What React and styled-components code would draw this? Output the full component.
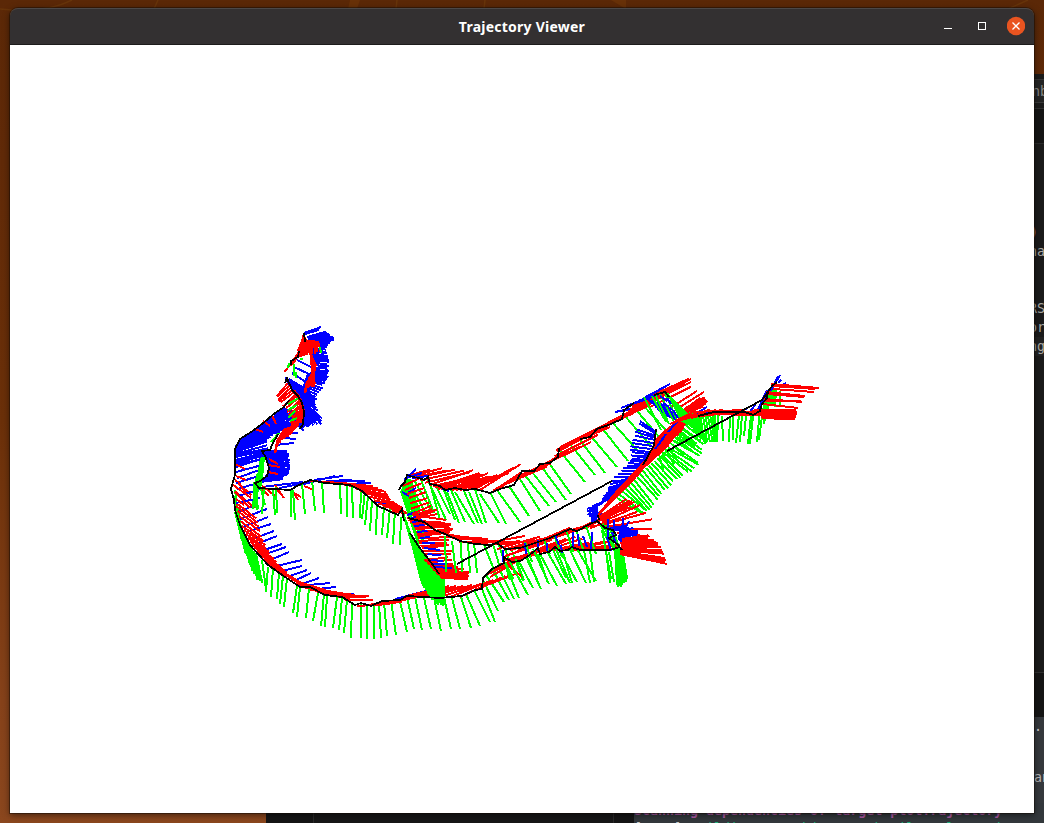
import React from "react";
import styled, { createGlobalStyle } from "styled-components";

const GlobalStyle = createGlobalStyle`
  * { box-sizing: border-box; }
  body { margin: 0; overflow: hidden; }
`;

const Desktop = styled.main`
  position: relative;
  width: 1044px;
  height: 823px;
  overflow: hidden;
  background: linear-gradient(#5b2807 0, #612a08 160px, #6b3009 420px, #86421a 700px, #8b471e 100%);
`;

const Wallpaper = styled.svg`
  display: block;
  width: 1044px;
  height: 823px;
`;

const BackPanel = styled.section`
  position: absolute;
  left: ${(p) => p.$left}px;
  top: ${(p) => p.$top}px;
  width: ${(p) => p.$width}px;
  height: ${(p) => p.$height}px;
  overflow: hidden;
  background: ${(p) => p.$bg};
  font-family: "DejaVu Sans Mono", "Liberation Mono", monospace;
  font-size: 13.3px;
  white-space: pre;
`;

const EditorBand = styled.div`
  height: ${(p) => p.$height}px;
  padding-left: ${(p) => p.$indent || 0}px;
  background: ${(p) => p.$bg || "transparent"};
  border-bottom: ${(p) => (p.$rule ? `1px solid ${p.$rule}` : "none")};
  color: ${(p) => p.$color || "#aaa9a5"};
  line-height: ${(p) => p.$height}px;
`;

const TerminalLine = styled.div`
  height: 18px;
  line-height: 16px;
  color: ${(p) => p.$color};
  font-weight: ${(p) => (p.$bold ? 700 : 400)};
`;

const Green = styled.span`
  color: #1cb47c;
`;

const AppWindow = styled.section`
  position: absolute;
  left: 10px;
  top: 8px;
  width: 1024px;
  height: 805px;
  display: flex;
  flex-direction: column;
  border-radius: 8px 8px 0 0;
  box-shadow: 0 0 0 1px rgba(20, 10, 5, 0.45), 0 2px 7px rgba(0, 0, 0, 0.55);
`;

const TitleBar = styled.header`
  flex: 0 0 37px;
  display: grid;
  grid-template-columns: 1fr auto 1fr;
  align-items: center;
  border-radius: 8px 8px 0 0;
  border-top: 1px solid #4b4849;
  border-bottom: 1px solid #1d1c1c;
  background: #333031;
`;

const Title = styled.h1`
  grid-column: 2;
  margin: 0;
  color: #fff;
  font: 700 14px/20px "Noto Sans", "Open Sans", sans-serif;
  letter-spacing: 0.24px;
`;

const Controls = styled.div`
  justify-self: end;
  display: flex;
  align-items: center;
  gap: 16px;
  padding: 0 9px 2px 0;
`;

const Control = styled.button`
  display: block;
  width: 18px;
  height: 20px;
  padding: 0;
  border: 0;
  background: none;
  svg { display: block; }
`;

const Plot = styled.svg`
  display: block;
  flex: 0 0 768px;
  width: 1024px;
  background: #fff;
`;

const R = "#ff0000";
const G = "#00ff00";
const B = "#0000ff";

// Each strip interpolates between axis segments [x1, y1, x2, y2];
// `steps` is the number of samples drawn between two neighbours.
const strip = (color, steps, keys, jitter = 0) => ({ color, steps, keys, jitter });

const noise = (n) => {
  const v = Math.sin(n * 127.1) * 43758.5453;
  return v - Math.floor(v) - 0.5;
};

const stripPath = ({ keys, steps, jitter }) => {
  const out = [];
  keys.forEach((key, k) => {
    const next = keys[k + 1];
    const count = next ? steps : 1;
    for (let s = 0; s < count; s += 1) {
      const t = s / steps;
      const p = key.map((v, i) => (next ? v + (next[i] - v) * t : v));
      const j = jitter * noise(k * 31 + s + p[0]);
      const q = jitter * noise(k * 17 + s * 3 + p[1]);
      out.push(`M${p[0].toFixed(1)} ${p[1].toFixed(1)}L${(p[2] + j).toFixed(1)} ${(p[3] + q).toFixed(1)}`);
    }
  });
  return out.join("");
};

const strips = [
  // outer loop, left and bottom
  strip(G, 4, [[235,490,238,520],[235,512,245,548],[240,526,253,572],[248,544,258,580],[256,554,262,582]], 3),
  strip(G, 1, [[262,560,266,589],[268,567,266,592],[273,568,271,597],[279,573,277,599],[283,576,280,604],[287,578,284,607],[297,586,293,613],[300,587,297,617],[309,588,306,618],[318,593,313,621],[324,594,321,626],[327,596,325,627],[337,597,333,628],[342,598,339,630],[347,600,344,633],[352,604,351,638],[361,604,361,638],[367,605,367,639],[374,605,374,639],[379,603,381,638],[384,602,387,636],[391,600,396,635],[399,597,407,632],[407,597,414,629],[415,597,422,630],[424,598,431,629],[434,598,441,631],[444,597,451,629],[452,598,460,629],[461,597,471,628],[466,594,480,626],[474,590,490,622],[482,589,495,622],[483,580,498,611],[486,575,504,602],[492,569,509,600],[498,567,514,599]]),
  strip(B, 1, [[238,512,258,504],[240,519,267,509],[243,527,268,517],[246,532,271,524],[250,540,274,531],[254,545,277,536],[258,552,282,544],[263,555,286,547],[268,561,289,552],[272,567,302,560],[282,571,302,566],[290,576,307,570],[296,580,311,573],[299,585,319,578],[309,585,330,583],[318,589,336,587],[328,593,354,594],[395,599,438,588]]),
  strip(R, 2, [[235,480,250,496],[236,503,257,519]], 3),
  strip(R, 4, [[236,506,257,522],[242,526,263,541],[250,542,270,555],[259,553,282,568],[269,565,292,578],[284,574,308,588],[300,586,338,592],[320,593,355,595],[338,597,369,597]], 2),
  strip(R, 1, [[344,598,369,596],[345,600,373,600],[357,606,390,604],[365,605,402,602],[372,604,410,599]]),
  strip(R, 2, [[380,604,418,597],[400,600,445,590],[407,596,449,586],[420,597,463,586],[440,597,481,584],[460,597,505,576],[474,590,518,573]]),
  // left edge and upper-left cluster
  strip(B, 7, [[235,446,268,431],[235,457,268,450]], 2),
  strip(B, 5, [[235,460,266,452],[236,467,262,459]], 2),
  strip(B, 1, [[236,472,262,465],[237,478,262,469],[236,483,262,475],[237,489,258,483],[238,496,261,489],[236,503,260,498]]),
  strip(B, 10, [[240,440,265,438],[251,432,283,429],[268,420,300,425],[283,408,315,421]], 4),
  strip(B, 8, [[236,446,251,434],[247,438,263,430],[252,447,270,436]], 2),
  strip(B, 12, [[285,378,307,389],[290,387,311,400],[298,398,321,422],[301,414,309,423],[299,427,302,430]], 5),
  strip(B, 1, [[304,333,321,327],[305,334,319,330]]),
  strip(B, 10, [[307,337,326,332],[308,338,334,338],[309,344,326,347]], 2),
  strip(B, 6, [[309,346,326,347],[312,356,328,359],[314,370,329,370],[306,376,327,379],[303,386,319,393],[299,400,312,404]], 3),
  strip(B, 1, [[297,360,311,367],[294,367,309,374],[292,373,306,382],[289,379,304,388],[291,433,298,433],[283,438,296,439],[276,445,294,443]]),
  strip(B, 7, [[262,451,287,450],[268,460,290,463],[269,472,289,472],[260,482,283,479]], 2),
  strip(B, 1, [[262,487,303,482],[279,488,316,481],[296,486,335,476],[314,480,343,476],[326,481,352,480],[336,481,365,481],[344,484,371,483],[362,492,386,495],[375,502,394,504]]),
  strip(R, 7, [[304,334,298,351],[306,340,300,356],[311,340,306,354],[318,341,319,352]], 3),
  strip(R, 6, [[304,344,292,364],[298,354,284,373]], 3),
  strip(R, 5, [[288,383,276,395],[296,394,283,405],[302,404,290,414],[303,416,292,425]], 3),
  strip(R, 7, [[294,390,300,398],[298,397,304,411],[302,407,302,421],[300,418,294,431],[294,425,284,438],[284,429,278,444],[277,440,275,453]], 2),
  strip(R, 4, [[310,350,313,375],[312,356,314,386],[316,364,311,386],[308,380,305,390],[306,384,306,392]], 2),
  strip(R, 1, [[272,415,276,424],[263,421,270,426],[255,429,263,432],[235,464,245,469],[236,476,246,480],[238,481,246,494],[232,484,251,498],[235,492,250,508],[236,499,244,505],[269,459,278,464],[268,465,280,467],[268,472,278,474],[260,484,275,496],[275,485,284,498],[276,489,283,496],[290,491,301,497],[292,490,298,500],[304,486,314,490],[258,485,269,496]]),
  strip(G, 1, [[294,364,294,376],[296,372,296,378],[289,363,288,368],[299,398,288,404],[297,405,288,410],[295,411,288,418],[297,418,290,421],[279,433,271,442],[320,347,321,353],[303,359,300,359]]),
  strip(G, 6, [[261,458,258,476],[264,457,263,479],[254,482,254,508],[256,485,258,509]], 3),
  strip(G, 1, [[261,489,265,505],[264,488,262,514],[273,489,275,515],[276,487,277,513],[291,490,291,517],[293,490,295,520],[302,484,305,514],[312,480,315,511],[322,481,324,513],[340,482,341,514],[347,484,347,517],[352,486,353,518],[361,490,360,518],[365,491,362,519],[368,496,365,525],[372,500,370,531],[377,504,376,535],[384,506,382,535],[390,508,387,538],[395,510,393,544],[401,517,400,545]]),
  strip(R, 3, [[310,481,347,483],[335,483,373,486],[350,486,386,492],[365,493,391,500],[378,504,402,507],[389,508,402,511],[394,512,408,513]], 1),
  // middle bundle
  strip(G, 7, [[401,491,418,546],[406,478,425,535],[411,480,424,540]], 3),
  strip(G, 14, [[402,510,419,565],[411,535,423,586],[424,555,433,600],[438,574,444,605]], 2),
  strip(G, 6, [[432,574,434,603],[444,577,444,605]], 2),
  strip(G, 1, [[403,490,410,510],[405,480,420,510],[409,482,425,512],[414,480,431,510],[421,480,434,513],[428,480,446,520],[431,487,440,520],[437,488,450,514],[444,490,455,520],[447,492,459,523],[451,490,465,522],[455,492,474,524],[464,491,478,523],[469,492,482,524],[475,489,486,523],[480,494,499,523],[490,492,506,524],[497,490,520,522],[509,486,529,516],[518,476,540,511],[524,474,549,506],[532,472,556,502],[541,466,566,500],[549,463,571,494],[559,450,585,482],[570,444,595,475],[580,440,605,473],[589,434,617,467],[602,428,628,461],[612,422,639,452],[625,416,650,445],[632,405,660,438],[640,402,666,430]]),
  strip(R, 3, [[407,476,430,470],[416,478,457,469],[430,485,474,473],[438,489,482,475],[448,490,490,475],[460,490,504,474],[480,490,520,467]], 6),
  strip(R, 3, [[493,491,522,472],[515,480,548,466],[528,472,558,456],[552,461,592,442],[560,447,610,422],[580,439,633,413],[607,423,654,402],[625,414,674,389],[635,403,690,379]], 2),
  strip(R, 1, [[556,450,610,427],[590,433,650,405],[564,447,675,390]]),
  strip(B, 1, [[404,480,416,469],[406,478,422,473],[412,478,428,476],[402,492,409,496],[407,515,416,512],[408,493,416,488],[442,489,449,491]]),
  strip(R, 3, [[403,486,419,480],[409,498,425,492],[412,514,430,506],[415,519,436,511]], 4),
  strip(R, 4, [[407,518,430,522],[413,525,450,523],[417,534,450,530],[419,543,447,542],[425,554,452,552]], 4),
  strip(R, 5, [[424,560,448,559],[431,567,459,568],[437,574,468,575]], 4),
  strip(R, 6, [[437,571,469,572],[441,578,468,579]], 1),
  strip(B, 2, [[410,519,420,515],[414,526,425,525],[420,538,430,537],[424,548,440,550],[431,560,443,561],[433,567,452,568]]),
  strip(R, 1, [[410,520,437,514],[413,515,446,520],[424,524,453,529],[435,532,473,539],[449,536,488,539],[452,538,491,541],[459,542,494,541],[470,542,511,542],[480,544,525,536],[489,545,520,541],[498,545,535,540]]),
  strip(G, 1, [[445,536,446,572],[452,541,456,573],[461,542,462,572],[468,543,470,573],[474,543,477,573],[484,545,497,577],[493,544,503,578],[499,545,510,580],[505,549,515,574],[511,548,523,581]]),
  // lower-right strip
  strip(R, 3, [[488,574,525,557],[505,560,542,552],[512,561,549,544],[536,553,576,537],[547,551,594,544],[568,550,618,541],[582,550,621,548]], 2),
  strip(R, 3, [[497,549,539,537],[517,551,552,539],[530,545,571,528],[553,538,594,525],[575,530,611,514],[597,520,635,506]], 2),
  strip(R, 1, [[504,562,522,577],[490,577,517,561],[505,556,547,542],[590,528,637,512]]),
  strip(G, 1, [[504,561,519,598],[510,562,528,595],[518,560,533,588],[526,557,541,589],[533,549,549,584],[540,554,557,586],[548,553,566,584],[556,549,570,583],[560,551,577,582],[570,550,586,583],[577,549,596,581],[590,550,594,582],[525,542,532,562],[544,540,550,554],[555,537,562,557],[567,532,573,552],[576,530,583,549],[586,526,596,554],[602,530,611,579],[611,535,618,567]]),
  strip(G, 3, [[505,562,512,580],[538,554,549,583]], 4),
  strip(G, 1, [[553,550,566,578],[563,552,572,583],[584,550,590,583],[606,551,610,583],[609,552,614,582]]),
  strip(G, 12, [[614,546,618,584],[618,550,620,586],[622,548,626,580]], 4),
  strip(G, 4, [[600,523,609,545],[611,526,621,550]], 3),
  strip(B, 1, [[503,550,503,562],[525,543,526,554],[538,540,538,551],[547,543,547,551],[555,535,559,545],[561,545,562,553],[573,532,573,547],[578,534,579,546],[583,536,587,547],[592,532,591,551],[607,537,611,551],[612,532,616,544]]),
  // curving right bundle
  strip(B, 4, [[598,514,589,516],[598,506,588,510],[617,493,599,505],[630,480,613,482],[641,468,624,468],[645,460,633,459],[649,452,630,450],[655,440,635,437],[656,432,641,420]], 3),
  strip(B, 8, [[612,495,599,505],[632,478,613,482]], 2),
  strip(B, 5, [[594,509,591,521],[601,513,594,521]], 3),
  strip(G, 5, [[617,498,643,514],[629,480,651,507],[646,468,665,491],[660,456,680,477],[669,448,698,466],[682,429,704,444]], 3),
  strip(G, 5, [[658,450,662,470],[672,440,690,452],[684,424,702,440]], 4),
  strip(R, 11, [[598,515,635,478],[615,493,646,462],[630,480,667,445]], 4),
  strip(R, 9, [[630,480,667,445],[648,459,681,428],[655,441,688,414],[665,431,690,412]], 5),
  strip(B, 1, [[668,432,675,424],[676,424,680,417],[655,449,663,439],[660,442,666,434]]),
  strip(R, 5, [[599,517,628,499],[602,521,634,502]], 3),
  strip(R, 2, [[602,522,641,506],[606,527,653,520],[617,533,650,536],[620,543,658,543],[623,552,666,562]], 3),
  strip(B, 5, [[610,528,626,526],[619,531,637,531],[618,539,638,534],[622,543,630,543]], 3),
  strip(B, 1, [[608,519,608,539],[614,520,614,534],[623,518,623,536],[629,521,622,535]]),
  strip(R, 8, [[622,539,647,536],[621,547,660,547],[620,554,666,563]], 3),
  // upper-right strip
  strip(R, 1, [[637,404,691,379],[641,406,684,381],[650,402,691,382],[650,407,691,387],[663,401,690,387],[667,410,697,391],[675,410,704,392],[674,418,700,398]]),
  strip(B, 1, [[615,412,630,409],[621,408,642,400],[630,405,652,397],[638,401,659,394],[646,397,660,390],[642,399,670,384]]),
  strip(B, 5, [[648,400,665,405],[654,405,671,412],[661,413,677,420]], 5),
  strip(G, 1, [[655,394,669,424],[660,394,674,422],[665,393,677,420]]),
  strip(G, 10, [[667,393,682,421],[674,401,694,427],[684,411,705,439],[697,414,707,443]], 4),
  strip(G, 1, [[644,397,661,430],[652,396,666,422]]),
  strip(B, 1, [[660,396,667,401],[663,403,669,407],[667,398,671,404],[670,408,675,412],[674,412,678,418]]),
  strip(R, 8, [[684,409,704,397],[687,412,708,401],[691,411,703,406]], 2),
  strip(R, 4, [[670,424,696,411],[684,419,724,410],[711,415,745,411],[734,414,775,411],[748,414,785,417]], 2),
  strip(G, 3, [[696,416,697,438],[703,416,707,442],[710,414,715,442],[718,415,717,442]], 1),
  strip(G, 1, [[722,416,723,441],[730,416,729,442],[733,416,733,440],[739,415,736,443],[742,414,740,442],[746,416,744,436],[751,415,748,444],[753,416,750,444],[760,408,757,442],[763,408,759,440],[765,400,764,423]]),
  strip(G, 6, [[764,397,763,424],[770,390,768,405],[775,389,774,405]], 2),
  strip(G, 1, [[776,390,775,407],[780,391,780,406]]),
  strip(B, 1, [[697,413,707,407],[704,412,712,411],[733,413,747,409],[749,413,755,405],[757,412,767,390],[760,406,770,388],[770,392,780,375],[772,389,778,376],[778,383,781,380],[780,387,786,383]]),
  strip(R, 1, [[771,384,819,388],[772,386,815,389],[773,389,814,392]]),
  strip(R, 1, [[766,392,805,396],[767,394,804,397],[764,399,802,402],[765,401,801,401]]),
  strip(R, 7, [[754,410,796,410],[760,414,797,414],[762,418,795,419]], 1),
  strip(R, 1, [[684,418,735,412],[694,412,745,410],[707,415,760,411],[720,414,778,416],[733,412,790,418],[762,404,798,408]]),
];

const trajectories = [
  "M457 564L612 481M667 451L762 400L772 386L777 382",
  "M399 490L401 486L405 482L407 475L413 477L419 478L424 480L428 477L430 484L440 486L445 490L455 488L465 490L475 489L490 493L500 489L514 485L522 471L534 471L540 464L550 463L558 457L559 448",
  "M580 439L590 437L597 429L611 424L622 419L624 410L634 403M654 395L665 392L669 397M698 416L714 412L730 412L745 412L753 415L760 411L762 404L767 398L768 391",
  "M304 333L305 342M299 351L298 357L291 361L291 365M285 383L287 378L292 390L298 396L302 403L304 412L303 424L300 429",
  "M278 434L272 445L270 450L262 451L266 458L269 468L267 476L260 481L255 483L259 488L290 490L299 485L310 480L325 483L350 485L362 491L378 506L398 515L402 509L404 521",
  "M289 400L284 407L275 413L262 424L251 432L240 439L235 449L235 475L231 489L234 500L235 510L240 525L250 545L268 565L285 577L300 587L310 587L325 595L342 597L355 605L361 603L371 606L382 601L400 600L407 596L440 598L462 596L475 590L482 589L483 578L492 569L504 563L504 557L512 562L520 561L527 557L538 548L540 554L549 552L555 547L560 551L568 550L572 547L580 550L610 550L620 547",
  "M408 518L424 522L435 530L445 534L460 541L475 544L490 545L497 543L505 549L520 548L550 538L570 529L577 531L590 524L597 521L605 528L613 530L616 535L609 538L618 545L622 550",
  "M656 429L654 445L648 456L643 465M598 515L599 520",
  "M410 533L419 547L433 565L439 574",
];

const Minimize = () => <svg width="18" height="20"><path d="M5 12.5h8" stroke="#fff" strokeWidth="1" shapeRendering="crispEdges" /></svg>;
const Maximize = () => <svg width="18" height="20"><path d="M5.5 6.5h7v7h-7z" fill="none" stroke="#fff" shapeRendering="crispEdges" /></svg>;
const Close = () => (
  <svg width="18" height="20"><circle cx="9" cy="10" r="9.2" fill="#e95420" /><path d="m5.5 6.5 7 7m0-7-7 7" stroke="#fff" strokeWidth="1.3" /></svg>
);

export default function App() {
  return (
    <Desktop>
      <GlobalStyle />
      <Wallpaper>
        <path d="M0 9Q45 14 72 0M154 9L158 0M396 9L397 0M484 9L485 0M1008 9L1028 0" fill="none" stroke="#67340a" strokeWidth="1.5" />
        <path d="M348 9L350 0H360L357 9ZM611 0H626V9Z" fill="#683108" />
      </Wallpaper>
      <BackPanel $left={1026} $top={74} $width={18} $height={643} $bg="#1b1b1b">
        <EditorBand $height={6} $rule="#353535" />
        <EditorBand $height={23} $indent={6} $bg="#242424" $rule="#3b3b3b" $color="#858585">nb</EditorBand>
        <EditorBand $height={6} $rule="#303030" />
        <EditorBand $height={35} $bg="#151515" $rule="#2c2c2c" />
        <EditorBand $height={79} />
        <EditorBand $height={19} $indent={4} $color="#bd8643">)</EditorBand>
        <EditorBand $height={19} $indent={3}>na</EditorBand>
        <EditorBand $height={38} />
        <EditorBand $height={19} $indent={3}>RS</EditorBand>
        <EditorBand $height={19} $indent={3}>or</EditorBand>
        <EditorBand $height={19} $indent={3} $bg="#222">ng</EditorBand>
        <EditorBand $height={317} $rule="#303030" />
        <EditorBand $height={44} $bg="#151515" />
      </BackPanel>
      <BackPanel $left={1026} $top={717} $width={18} $height={96} $bg="#35393d">
        <EditorBand $height={20} $indent={8} $color="#c8c8c8">.</EditorBand>
        <EditorBand $height={31} />
        <EditorBand $height={20} $indent={8} $color="#b5b5b5">an</EditorBand>
      </BackPanel>
      <BackPanel $left={266} $top={805} $width={47} $height={18} $bg="#151515" />
      <BackPanel $left={313} $top={805} $width={1} $height={18} $bg="#2a2a2a" />
      <BackPanel $left={314} $top={805} $width={299} $height={18} $bg="#171717" />
      <BackPanel $left={613} $top={805} $width={1} $height={18} $bg="#2a2a2a" />
      <BackPanel $left={614} $top={805} $width={20} $height={18} $bg="#151515" />
      <BackPanel $left={634} $top={803} $width={410} $height={20} $bg="#33383c">
        <TerminalLine $bold $color="#ad5ba5">Scanning dependencies of target plotTrajectory</TerminalLine>
        <TerminalLine $color="#c8c8c8">[ 50%] <Green>Building CXX object CMakeFiles/plotTrajectory.dir</Green></TerminalLine>
      </BackPanel>
      <AppWindow>
        <TitleBar>
          <Title>Trajectory Viewer</Title>
          <Controls>
            <Control aria-label="Minimize"><Minimize /></Control>
            <Control aria-label="Maximize"><Maximize /></Control>
            <Control aria-label="Close"><Close /></Control>
          </Controls>
        </TitleBar>
        <Plot viewBox="10 45 1024 768" shapeRendering="crispEdges">
          {strips.map((s, i) => (
            <path key={i} d={stripPath(s)} stroke={s.color} strokeWidth="2" fill="none" />
          ))}
          {trajectories.map((d) => (
            <path key={d} d={d} stroke="#000" strokeWidth="1.8" fill="none" />
          ))}
        </Plot>
      </AppWindow>
    </Desktop>
  );
}
